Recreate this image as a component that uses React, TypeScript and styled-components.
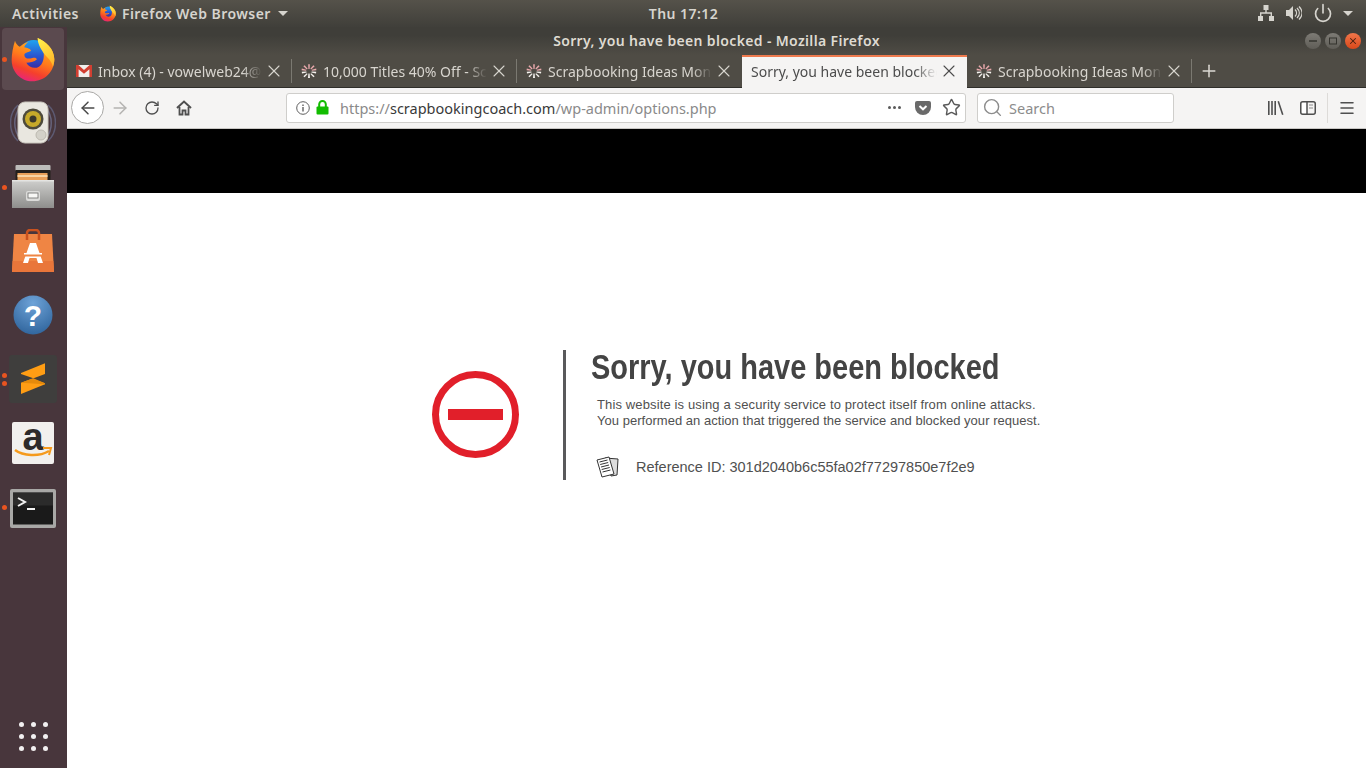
import React from 'react';
import styled, { createGlobalStyle } from 'styled-components';
import { ArrowLeft, ArrowRight, RotateCw, Star, Search, X, Plus, Menu, Power } from 'lucide-react';

const GlobalStyle = createGlobalStyle`
  html, body { margin: 0; padding: 0; width: 1366px; height: 768px; overflow: hidden; background: #fff; }
  * { box-sizing: border-box; }
`;

const Screen = styled.div`
  width: 1366px;
  height: 768px;
  display: flex;
  flex-direction: column;
  font-family: "Noto Sans", "Open Sans", sans-serif;
`;

const TopBar = styled.div`
  height: 27px;
  flex: none;
  display: flex;
  align-items: center;
  padding: 0 13px 1px 12px;
  background: linear-gradient(#55524a, #403f3a);
  color: #d6d4ce;
  font-size: 14px;
  font-weight: 600;
  letter-spacing: 0.45px;
`;

const TopSide = styled.div<{ $end?: boolean }>`
  flex: 1;
  display: flex;
  align-items: center;
  justify-content: ${p => (p.$end ? 'flex-end' : 'flex-start')};
`;

const AppMenu = styled.div`
  margin-left: 21px;
  display: flex;
  align-items: center;
  gap: 6px;
`;

const Caret = styled.span`
  width: 0;
  height: 0;
  margin-left: 1px;
  border-left: 5px solid transparent;
  border-right: 5px solid transparent;
  border-top: 5px solid #d6d4ce;
`;

const Clock = styled.div`
  position: relative;
  left: 1px;
`;

const Tray = styled.div`
  display: flex;
  align-items: center;
  gap: 12px;
  color: #d6d4ce;
`;

const PowerIcon = styled(Power)`
  margin: 0 -3px 0 -1px;
`;

const Body = styled.div`
  flex: 1;
  display: flex;
  min-height: 0;
`;

const Dock = styled.nav`
  width: 67px;
  flex: none;
  display: flex;
  flex-direction: column;
  align-items: center;
  gap: 2px;
  padding: 1px 1px 17px 0;
  background: #48363c;
`;

const DockItem = styled.div<{ $active?: boolean }>`
  position: relative;
  width: 62px;
  height: 62px;
  flex: none;
  display: flex;
  align-items: center;
  justify-content: center;
  border-radius: 4px;
  background: ${p => (p.$active ? '#5b4a4f' : 'transparent')};
`;

const RunDots = styled.div`
  position: absolute;
  left: 0;
  top: 0;
  bottom: 0;
  display: flex;
  flex-direction: column;
  justify-content: center;
  gap: 3px;
`;

const RunDot = styled.span`
  width: 5px;
  height: 5px;
  border-radius: 50%;
  background: #e95420;
`;

const AppGrid = styled.div`
  margin-top: auto;
  display: grid;
  grid-template-columns: repeat(3, 5px);
  gap: 7px;
`;

const GridDot = styled.span`
  width: 5px;
  height: 5px;
  border-radius: 50%;
  background: #f2f0f0;
`;

const Browser = styled.div`
  flex: 1;
  min-width: 0;
  display: flex;
  flex-direction: column;
`;

const TitleBar = styled.div`
  position: relative;
  height: 28px;
  flex: none;
  display: flex;
  align-items: center;
  justify-content: center;
  padding: 0 0 1px 0;
  background: linear-gradient(#3f3e39 30%, #4f4c45);
  color: #dfdbd2;
  font-size: 14px;
  font-weight: 600;
  letter-spacing: 0.35px;
`;

const WindowButtons = styled.div`
  position: absolute;
  right: 5px;
  top: 6px;
  display: flex;
  gap: 4px;
`;

const WindowButton = styled.div<{ $close?: boolean }>`
  width: 16px;
  height: 16px;
  border-radius: 50%;
  display: flex;
  align-items: center;
  justify-content: center;
  background: ${p => (p.$close ? 'linear-gradient(#f0764a, #d9481a)' : 'linear-gradient(#7d7b75, #5f5d57)')};
  color: ${p => (p.$close ? '#4a2010' : '#35342f')};
`;

const TabStrip = styled.div`
  height: 33px;
  flex: none;
  display: flex;
  background: #4f4c45;
  border-bottom: 1px solid #2f2e2a;
`;

const Tab = styled.div<{ $active?: boolean }>`
  position: relative;
  width: 225px;
  flex: none;
  height: ${p => (p.$active ? '33px' : '32px')};
  display: flex;
  align-items: center;
  padding: ${p => (p.$active ? '0 8px 3px 9px' : '0 8px 0 9px')};
  gap: 6px;
  font-size: 14px;
  color: ${p => (p.$active ? '#4c4c4c' : '#d8d5cf')};
  background: ${p => (p.$active ? '#f5f4f3' : 'transparent')};
  border-top: ${p => (p.$active ? '2px solid #ee7a4e' : 'none')};
`;

const TabTitle = styled.span`
  flex: 1;
  min-width: 0;
  overflow: hidden;
  white-space: nowrap;
  -webkit-mask-image: linear-gradient(to right, #000 88%, transparent 100%);
  mask-image: linear-gradient(to right, #000 88%, transparent 100%);
`;

const TabClose = styled(X)`
  flex: none;
  margin-left: -4px;
`;

const TabDivider = styled.span`
  width: 1px;
  height: 24px;
  margin: 4px 0 0 -1px;
  flex: none;
  background: #7b7971;
`;

const NewTab = styled.div`
  width: 33px;
  display: flex;
  align-items: center;
  justify-content: center;
  color: #dcd9d3;
`;

const Toolbar = styled.div`
  height: 41px;
  flex: none;
  display: flex;
  align-items: center;
  padding: 0 0 1px 4px;
  background: #f5f4f3;
  border-bottom: 1px solid #c9c7c4;
`;

const BackButton = styled.div`
  width: 33px;
  height: 33px;
  border-radius: 50%;
  border: 1px solid #a9a8a6;
  background: #fff;
  display: flex;
  align-items: center;
  justify-content: center;
  color: #4a4a4a;
`;

const ToolIcon = styled.div<{ $dim?: boolean }>`
  width: 32px;
  height: 32px;
  flex: none;
  display: flex;
  align-items: center;
  justify-content: center;
  color: ${p => (p.$dim ? '#b4b3b1' : '#4f4f4f')};
`;

const UrlBar = styled.div`
  width: 680px;
  height: 30px;
  margin-left: 86px;
  display: flex;
  align-items: center;
  padding: 0 4px 0 9px;
  background: #fff;
  border: 1px solid #cfcecb;
  border-radius: 3px;
  font-size: 14.5px;
`;

const LockIcon = styled.svg`
  margin-left: 6px;
  flex: none;
`;

const Url = styled.div`
  flex: 1;
  margin-left: 11px;
  color: #8a8a8a;
  white-space: nowrap;
`;

const UrlHost = styled.span`
  color: #3a3a3a;
`;

const UrlActions = styled.div`
  display: flex;
  align-items: center;
  gap: 11px;
  color: #5a5a5a;
`;

const Dots = styled.span`
  display: flex;
  gap: 2px;
  margin-right: 3px;
`;

const Dot = styled.span`
  width: 3px;
  height: 3px;
  border-radius: 50%;
  background: #5a5a5a;
`;

const SearchBox = styled.div`
  width: 197px;
  height: 30px;
  margin-left: 11px;
  display: flex;
  align-items: center;
  gap: 6px;
  padding: 0 4px;
  background: #fff;
  border: 1px solid #cfcecb;
  border-radius: 3px;
  color: #8c8c8c;
  font-size: 14.5px;
`;

const ToolEnd = styled.div`
  margin-left: auto;
  display: flex;
  align-items: center;
  padding-right: 3px;
`;

const ToolSep = styled.span`
  width: 1px;
  height: 30px;
  margin: 0 3px;
  background: #dddbd8;
`;

const BlackBand = styled.div`
  height: 64px;
  flex: none;
  background: #000;
`;

const Page = styled.main`
  flex: 1;
  display: flex;
  align-items: flex-start;
  padding: 157px 0 0 365px;
  background: #fff;
  font-family: "Liberation Sans", Arial, sans-serif;
`;

const BlockedIcon = styled.div`
  width: 87px;
  height: 87px;
  flex: none;
  margin-top: 21px;
  display: flex;
  align-items: center;
  justify-content: center;
  border: 7.5px solid #e11f2a;
  border-radius: 50%;
`;

const BlockedBar = styled.span`
  width: 55px;
  height: 11px;
  background: #e11f2a;
`;

const Details = styled.section`
  margin-left: 44px;
  height: 130px;
  padding-left: 25px;
  border-left: 3px solid #59595b;
`;

// the original face is a narrow bold, so the regular bold is condensed to its width
const Heading = styled.h1`
  margin: 0;
  font-family: "Liberation Sans", Arial, sans-serif;
  font-size: 35px;
  line-height: 33px;
  font-weight: 700;
  color: #444;
  white-space: nowrap;
  transform: scaleX(0.828);
  transform-origin: left center;
`;

const Message = styled.div`
  margin: 14px 0 0 6px;
  font-size: 13px;
  line-height: 16px;
  color: #505050;
  white-space: nowrap;
`;

const MessageLine = styled.p<{ $spacing: number }>`
  margin: 0;
  letter-spacing: ${p => p.$spacing}px;
`;

const Reference = styled.div`
  margin: 27px 0 0 5px;
  display: flex;
  align-items: center;
  gap: 17px;
  font-size: 14.5px;
  color: #505050;
  white-space: nowrap;
`;

const GmailIcon = () => (
  <svg width="16" height="12" viewBox="0 0 16 12">
    <rect width="16" height="12" fill="#f1efec" />
    <path d="M0 0h2.4L8 5 13.600 0H16v12h-2.600V4.200L8 8.800 2.600 4.200V12H0z" fill="#d23f31" />
  </svg>
);

const PetalIcon = () => (
  <svg width="16" height="16" viewBox="0 0 16 16">
    <g fill="#eaa9ad">
      <path d="M7.200 1.200h1.600L8.600 6H7.400z" />
      <path d="M2.400 3.200l1.200-1 3 3.400-.8.800z" />
      <path d="M13.600 3.200l-1.200-1-3 3.400.8.800z" />
      <path d="M.6 7.200L.8 5.600l4.400 1.200v1z" />
      <path d="M15.400 7.200l-.2-1.600-4.400 1.200v1z" />
    </g>
    <g fill="#f5f2ee">
      <path d="M1 10.400l-.2-1.600 4.600-.2.2 1z" />
      <path d="M15 10.400l.2-1.600-4.600-.2-.2 1z" />
      <path d="M3.600 14.200l-1.200-1 3.400-3 .8.800z" />
      <path d="M12.400 14.200l1.200-1-3.400-3-.8.800z" />
      <path d="M7 15h2l-.4-4.600H7.400z" />
    </g>
  </svg>
);

// coordinates are those of the logo in a 3x crop of the dock
const FirefoxLogo = ({ id, width, height }: { id: string; width: number; height: number }) => (
  <svg width={width} height={height} viewBox="20 24 132 138">
    <defs>
      <linearGradient id={`${id}-body`} x1="0.7" y1="0.1" x2="0.35" y2="1">
        <stop offset="0" stopColor="#ffb51f" />
        <stop offset="0.45" stopColor="#ff7a1c" />
        <stop offset="0.75" stopColor="#f5402c" />
        <stop offset="1" stopColor="#e8257a" />
      </linearGradient>
      <linearGradient id={`${id}-globe`} x1="0.5" y1="0" x2="0.5" y2="1">
        <stop offset="0" stopColor="#1fa4f0" />
        <stop offset="0.55" stopColor="#2a55cf" />
        <stop offset="1" stopColor="#3b2aa0" />
      </linearGradient>
      <linearGradient id={`${id}-tail`} x1="0.3" y1="0" x2="0.7" y2="1">
        <stop offset="0" stopColor="#ffee4a" />
        <stop offset="1" stopColor="#ffb52a" />
      </linearGradient>
    </defs>
    <circle cx="88" cy="80" r="44" fill={`url(#${id}-globe)`} />
    <path
      d="M32 38C34 46 40 52 46 56C54 50 62 44 72 42C64 48 60 54 60 58C68 60 78 62 80 68C76 72 62 72 60 80C60 92 72 94 84 90C92 88 96 90 98 94C90 102 76 104 66 104C74 118 90 124 104 116C116 108 120 90 118 74C116 58 102 48 100 30C124 40 150 62 150 94C150 132 120 160 84 160C50 160 22 132 22 96C22 78 26 56 32 38Z"
      fill={`url(#${id}-body)`}
    />
    <path d="M100 30C124 40 150 62 150 94C150 102 148 110 146 116C140 96 128 88 120 78C112 66 100 50 100 30Z" fill={`url(#${id}-tail)`} />
  </svg>
);

const SpeakerIcon = () => (
  <svg width="46" height="44" viewBox="0 0 46 44">
    <path d="M8 4C-2 13-2 31 8 40M38 4c10 9 10 27 0 36" fill="none" stroke="#5d5a72" strokeWidth="1.500" />
    <path d="M10 7C3 15 3 29 10 37M36 7c7 8 7 22 0 30" fill="none" stroke="#66637c" strokeWidth="1.500" />
    <rect x="8" y="1" width="30" height="41" rx="7" fill="#e9e7e0" />
    <rect x="8" y="1" width="30" height="41" rx="7" fill="none" stroke="#c9c6bd" />
    <circle cx="23" cy="18" r="10.500" fill="#4d4a3c" />
    <circle cx="23" cy="18" r="8" fill="#c6a92a" />
    <circle cx="23" cy="18" r="3.500" fill="#3b382c" />
    <circle cx="31" cy="34" r="5" fill="#d3d1c9" stroke="#bdbab1" />
  </svg>
);

const FilesIcon = () => (
  <svg width="42" height="44" viewBox="0 0 42 44">
    <defs>
      <linearGradient id="drawerFront" x1="0" y1="0" x2="0" y2="1">
        <stop offset="0" stopColor="#cfcfcd" />
        <stop offset="1" stopColor="#8e8e8c" />
      </linearGradient>
    </defs>
    <rect x="3.500" y="0" width="35" height="6" rx="1" fill="#bcbcba" />
    <rect x="3.500" y="5" width="35" height="14" fill="#24201d" />
    <rect x="5.500" y="8" width="30" height="9" fill="#e8a05a" />
    <rect x="5.500" y="10" width="30" height="2" fill="#f6d3a3" />
    <rect x="0" y="15" width="42" height="28" fill="url(#drawerFront)" />
    <rect x="0" y="15" width="42" height="1.500" fill="#e4e4e2" />
    <rect x="14" y="26" width="14" height="10" rx="2" fill="#dcdcda" />
    <rect x="16" y="28" width="10" height="5" fill="#f7f7f5" stroke="#6b6b69" strokeWidth="0.800" />
  </svg>
);

const StoreIcon = () => (
  <svg width="42" height="44" viewBox="0 0 42 44">
    <path d="M2 5h38l2 38H0z" fill="#ef8544" />
    <path d="M.6 32h40.800l.6 11H0z" fill="#e9763a" />
    <path d="M15 11V4a3 3 0 0 1 3-3h6a3 3 0 0 1 3 3v7" fill="none" stroke="#c9521f" strokeWidth="2.500" />
    <path d="M18 14h6l7 20h-5l-1.500-5h-7L16 34h-5z" fill="#fff" />
    <path d="M9 25h24v2.500H9z" fill="#ef8544" />
    <path d="M12 24h18v1.500H12z" fill="#fff" />
  </svg>
);

const HelpIcon = () => (
  <svg width="40" height="40" viewBox="0 0 40 40">
    <defs>
      <radialGradient id="helpBlue" cx="0.5" cy="0.2" r="0.9">
        <stop offset="0" stopColor="#6ea3d8" />
        <stop offset="1" stopColor="#2a5f97" />
      </radialGradient>
    </defs>
    <circle cx="20" cy="20" r="19.500" fill="url(#helpBlue)" />
    <text x="20" y="31" textAnchor="middle" fontFamily="Liberation Sans, sans-serif" fontWeight="700" fontSize="30" fill="#fff">?</text>
  </svg>
);

const SublimeIcon = () => (
  <svg width="48" height="48" viewBox="0 0 48 48">
    <rect width="48" height="48" rx="3" fill="#3f3e3d" />
    <path d="M12 18L36 8.300V19l-12.700 4.700L36 28.300v1L12 39V27.700l12.300-4.400L12 19z" fill="#ff9d14" />
    <path d="M12 27.700l12.300-4.400L36 28.300v1z" fill="#e58a0c" />
  </svg>
);

const AmazonIcon = () => (
  <svg width="42" height="42" viewBox="0 0 42 42">
    <rect width="42" height="42" rx="2" fill="#f1f0ee" />
    <text x="21" y="28" textAnchor="middle" fontFamily="Liberation Sans, sans-serif" fontWeight="700" fontSize="38" fill="#2d2b2b">a</text>
    <path d="M3 28c8 6 24 7 34 1" fill="none" stroke="#f59a1c" strokeWidth="2.500" />
    <path d="M31 26l8 0-2 7" fill="none" stroke="#f59a1c" strokeWidth="2" />
  </svg>
);

const TerminalIcon = () => (
  <svg width="46" height="42" viewBox="0 -3 46 42">
    <rect width="46" height="39" rx="2" fill="#a8a8a6" />
    <rect x="3" y="3.500" width="40" height="32" fill="#1a1a1a" />
    <rect x="3" y="3.500" width="40" height="13" fill="#333" opacity="0.7" />
    <path d="M8 9l7 4-7 4" fill="none" stroke="#f2f2f2" strokeWidth="2" />
    <path d="M17 20h8" stroke="#f2f2f2" strokeWidth="2" />
  </svg>
);

const NetworkIcon = () => (
  <svg width="16" height="16" viewBox="0 0 16 16" fill="currentColor">
    <path d="M5.500 0h5v5h-5zM0 11h5v5H0zM11 11h5v5h-5z" />
    <path d="M7.300 5h1.400v2.300H14V11h-1.400V8.700H3.400V11H2V7.300h5.300z" />
  </svg>
);

const VolumeIcon = () => (
  <svg width="16" height="16" viewBox="0 0 16 16" fill="currentColor">
    <path d="M0 5h3l4-4v14l-4-4H0z" />
    <path d="M9 4.500c2 2 2 5 0 7M11 3c3 3 3 7 0 10M13 1.500c4 4 4 9 0 13" fill="none" stroke="currentColor" strokeWidth="1.300" />
  </svg>
);

const HomeIcon = () => (
  <svg width="16" height="16" viewBox="0 0 16 16" fill="none" stroke="currentColor" strokeWidth="2">
    <path d="M1 8l7-6.500L15 8" />
    <path d="M3.500 7v7.500h3v-4h3v4h3V7" strokeWidth="1.800" />
  </svg>
);

const InfoIcon = () => (
  <svg width="14" height="14" viewBox="0 0 14 14">
    <circle cx="7" cy="7" r="6.300" fill="none" stroke="#5f5f5f" />
    <rect x="6.300" y="6" width="1.400" height="4.500" fill="#5f5f5f" />
    <rect x="6.300" y="3.500" width="1.400" height="1.500" fill="#5f5f5f" />
  </svg>
);

const PocketIcon = () => (
  <svg width="16" height="14" viewBox="0 0 16 14">
    <path d="M0 2a2 2 0 0 1 2-2h12a2 2 0 0 1 2 2v4a8 8 0 0 1-16 0z" fill="#6a6a6a" />
    <path d="M4.500 5L8 8.300 11.500 5" fill="none" stroke="#fff" strokeWidth="2" />
  </svg>
);

const LibraryIcon = () => (
  <svg width="16" height="14" viewBox="0 0 16 14" fill="#4f4f4f">
    <path d="M0 0h1.600v14H0zM3.200 0h1.600v14H3.200zM6.400 0H8v14H6.400zM9.500.5l1.500-.5 4.500 13.500-1.500.5z" />
  </svg>
);

const SidebarIcon = () => (
  <svg width="16" height="14" viewBox="0 0 16 14">
    <rect x="0.750" y="0.750" width="14.500" height="12.500" rx="2" fill="none" stroke="#4f4f4f" strokeWidth="1.500" />
    <path d="M2 2h5v10H2z" fill="#fff" />
    <path d="M7 1v12" stroke="#4f4f4f" strokeWidth="1.500" />
    <path d="M9 4h4M9 7h4" stroke="#8a8a8a" />
  </svg>
);

const PapersIcon = () => (
  <svg width="23" height="22" viewBox="0 0 23 22">
    <path d="M9 2l13 1-1 16-6 1z" fill="#ddd" stroke="#333" />
    <path d="M1 4l12-3 5 17-12 3z" fill="#fff" stroke="#333" />
    <path d="M3.500 6l8-2M4.200 8.500l8-2M5 11l8-2M5.700 13.500l8-2M6.500 16l8-2" stroke="#333" strokeWidth="1" />
  </svg>
);

const dockApps = [
  { key: 'firefox', icon: <FirefoxLogo id="dock-ff" width={44} height={46} />, dots: 1, active: true },
  { key: 'speaker', icon: <SpeakerIcon />, dots: 0 },
  { key: 'files', icon: <FilesIcon />, dots: 1 },
  { key: 'store', icon: <StoreIcon />, dots: 0 },
  { key: 'help', icon: <HelpIcon />, dots: 0 },
  { key: 'sublime', icon: <SublimeIcon />, dots: 2 },
  { key: 'amazon', icon: <AmazonIcon />, dots: 0 },
  { key: 'terminal', icon: <TerminalIcon />, dots: 1 },
];

const tabs = [
  { title: 'Inbox (4) - vowelweb24@gmail.com', icon: <GmailIcon /> },
  { title: '10,000 Titles 40% Off - Scrapbooking', icon: <PetalIcon /> },
  { title: 'Scrapbooking Ideas Monthly Club', icon: <PetalIcon /> },
  { title: 'Sorry, you have been blocked', active: true },
  { title: 'Scrapbooking Ideas Monthly Club', icon: <PetalIcon /> },
];

const App: React.FC = () => {
  return (
    <Screen>
      <GlobalStyle />
      <TopBar>
        <TopSide>
          Activities
          <AppMenu>
            <FirefoxLogo id="menu-ff" width={16} height={17} />
            Firefox Web Browser
            <Caret />
          </AppMenu>
        </TopSide>
        <Clock>Thu 17:12</Clock>
        <TopSide $end>
          <Tray>
            <NetworkIcon />
            <VolumeIcon />
            <PowerIcon size={20} strokeWidth={2} />
            <Caret />
          </Tray>
        </TopSide>
      </TopBar>
      <Body>
        <Dock>
          {dockApps.map(app => (
            <DockItem key={app.key} $active={app.active}>
              {app.dots > 0 && (
                <RunDots>
                  {Array.from({ length: app.dots }).map((_, i) => (
                    <RunDot key={i} />
                  ))}
                </RunDots>
              )}
              {app.icon}
            </DockItem>
          ))}
          <AppGrid>
            {Array.from({ length: 9 }).map((_, i) => (
              <GridDot key={i} />
            ))}
          </AppGrid>
        </Dock>
        <Browser>
          <TitleBar>
            Sorry, you have been blocked - Mozilla Firefox
            <WindowButtons>
              <WindowButton>
                <svg width="8" height="8" viewBox="0 0 8 8"><path d="M0 4h8" stroke="currentColor" strokeWidth="1.500" /></svg>
              </WindowButton>
              <WindowButton>
                <svg width="8" height="8" viewBox="0 0 8 8"><rect x="0.500" y="1" width="7" height="6" fill="none" stroke="currentColor" /></svg>
              </WindowButton>
              <WindowButton $close>
                <X size={10} strokeWidth={2.500} />
              </WindowButton>
            </WindowButtons>
          </TitleBar>
          <TabStrip>
            {tabs.map((tab, i) => (
              <React.Fragment key={i}>
                <Tab $active={tab.active}>
                  {tab.icon}
                  <TabTitle>{tab.title}</TabTitle>
                  <TabClose size={20} strokeWidth={1.300} />
                </Tab>
                {!tab.active && !tabs[i + 1]?.active && <TabDivider />}
              </React.Fragment>
            ))}
            <NewTab>
              <Plus size={20} strokeWidth={1.800} />
            </NewTab>
          </TabStrip>
          <Toolbar>
            <BackButton>
              <ArrowLeft size={20} strokeWidth={1.800} />
            </BackButton>
            <ToolIcon $dim>
              <ArrowRight size={20} strokeWidth={1.800} />
            </ToolIcon>
            <ToolIcon>
              <RotateCw size={16} strokeWidth={2} />
            </ToolIcon>
            <ToolIcon>
              <HomeIcon />
            </ToolIcon>
            <UrlBar>
              <InfoIcon />
              <LockIcon width="13" height="15" viewBox="0 0 13 15">
                <path d="M3.200 7V4.300a3.300 3.300 0 0 1 6.600 0V7" fill="none" stroke="#12bc00" strokeWidth="2" />
                <rect x="0.500" y="6.500" width="12" height="8" rx="1" fill="#12bc00" />
              </LockIcon>
              <Url>
                https://<UrlHost>scrapbookingcoach.com</UrlHost>/wp-admin/options.php
              </Url>
              <UrlActions>
                <Dots>
                  <Dot />
                  <Dot />
                  <Dot />
                </Dots>
                <PocketIcon />
                <Star size={19} strokeWidth={1.800} />
              </UrlActions>
            </UrlBar>
            <SearchBox>
              <Search size={21} strokeWidth={1.600} />
              Search
            </SearchBox>
            <ToolEnd>
              <ToolIcon>
                <LibraryIcon />
              </ToolIcon>
              <ToolIcon>
                <SidebarIcon />
              </ToolIcon>
              <ToolSep />
              <ToolIcon>
                <Menu size={18} strokeWidth={2} />
              </ToolIcon>
            </ToolEnd>
          </Toolbar>
          <BlackBand />
          <Page>
            <BlockedIcon>
              <BlockedBar />
            </BlockedIcon>
            <Details>
              <Heading>Sorry, you have been blocked</Heading>
              <Message>
                <MessageLine $spacing={0.13}>This website is using a security service to protect itself from online attacks.</MessageLine>
                <MessageLine $spacing={0.03}>You performed an action that triggered the service and blocked your request.</MessageLine>
              </Message>
              <Reference>
                <PapersIcon />
                Reference ID: 301d2040b6c55fa02f77297850e7f2e9
              </Reference>
            </Details>
          </Page>
        </Browser>
      </Body>
    </Screen>
  );
};

export default App;
